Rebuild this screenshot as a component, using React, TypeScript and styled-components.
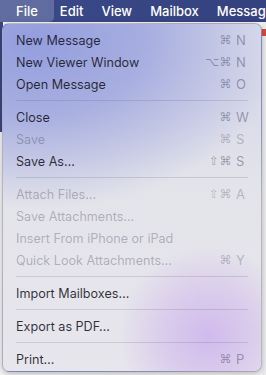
import * as React from 'react'
import styled, { createGlobalStyle } from 'styled-components'

const GlobalStyle = createGlobalStyle`
  html, body {
    margin: 0;
    padding: 0;
    width: 266px;
    height: 375px;
    overflow: hidden;
    background: #f4f4f6;
  }
  body {
    font-family: Inter, "Noto Sans", "DejaVu Sans", sans-serif;
    -webkit-font-smoothing: antialiased;
  }
`

type Entry =
  | { kind: 'item'; label: string; mods?: string; keyChar?: string; disabled?: boolean }
  | { kind: 'sep' }

const entries: Entry[] = [
  { kind: 'item', label: 'New Message', mods: '⌘', keyChar: 'N' },
  { kind: 'item', label: 'New Viewer Window', mods: '⌥⌘', keyChar: 'N' },
  { kind: 'item', label: 'Open Message', mods: '⌘', keyChar: 'O' },
  { kind: 'sep' },
  { kind: 'item', label: 'Close', mods: '⌘', keyChar: 'W' },
  { kind: 'item', label: 'Save', mods: '⌘', keyChar: 'S', disabled: true },
  { kind: 'item', label: 'Save As…', mods: '⇧⌘', keyChar: 'S' },
  { kind: 'sep' },
  { kind: 'item', label: 'Attach Files…', mods: '⇧⌘', keyChar: 'A', disabled: true },
  { kind: 'item', label: 'Save Attachments…', disabled: true },
  { kind: 'item', label: 'Insert From iPhone or iPad', disabled: true },
  { kind: 'item', label: 'Quick Look Attachments…', mods: '⌘', keyChar: 'Y', disabled: true },
  { kind: 'sep' },
  { kind: 'item', label: 'Import Mailboxes…' },
  { kind: 'sep' },
  { kind: 'item', label: 'Export as PDF…' },
  { kind: 'sep' },
  { kind: 'item', label: 'Print…', mods: '⌘', keyChar: 'P' }
]

const menuTitles = ['File', 'Edit', 'View', 'Mailbox', 'Message']

export default function App() {
  return (
    <Screen>
      <GlobalStyle />
      <MenuBar>
        {menuTitles.map((title, i) => (
          <MenuTitle key={title} active={i === 0}>
            {title}
          </MenuTitle>
        ))}
      </MenuBar>
      <Desktop>
        <LeftStrip />
        <WindowEdge>
          <RedMark />
        </WindowEdge>
        <Dropdown>
          {entries.map((entry, i) =>
            entry.kind === 'sep' ? (
              <Separator key={i} />
            ) : (
              <Row key={i} disabled={entry.disabled}>
                <Label>{entry.label}</Label>
                {entry.keyChar && (
                  <Shortcut disabled={entry.disabled}>
                    <Mods>{entry.mods}</Mods>
                    <KeyChar>{entry.keyChar}</KeyChar>
                  </Shortcut>
                )}
              </Row>
            )
          )}
        </Dropdown>
      </Desktop>
    </Screen>
  )
}

const Screen = styled.div`
  width: 266px;
  height: 375px;
  display: flex;
  flex-direction: column;
  overflow: hidden;
`

const MenuBar = styled.div`
  height: 22px;
  flex: none;
  display: flex;
  align-items: stretch;
  background: linear-gradient(90deg, #3a4989 0%, #35427f 100%);
  white-space: nowrap;
  overflow: hidden;
`

const MenuTitle = styled.div<{ active?: boolean }>`
  padding: 0 ${p => (p.active ? '16px' : '9px')} 0 ${p => (p.active ? '16px' : '9px')};
  display: flex;
  align-items: center;
  color: #ffffff;
  font-size: 13px;
  font-weight: 500;
  border-radius: 0 0 5px 0;
  background: ${p => (p.active ? 'rgba(255, 255, 255, 0.2)' : 'transparent')};
  &:nth-child(2) {
    padding-left: 6px;
  }
`

const Desktop = styled.div`
  flex: 1;
  position: relative;
  display: flex;
  justify-content: space-between;
  background: #f6f6f7;
`

const LeftStrip = styled.div`
  width: 3px;
  height: 110px;
  background: #3a4585;
`

const WindowEdge = styled.div`
  width: 4px;
  display: flex;
  flex-direction: column;
  padding-top: 7px;
  background: #eeeef0;
`

const RedMark = styled.div`
  height: 7px;
  background: #e0483c;
`

const Dropdown = styled.div`
  position: absolute;
  left: 2px;
  top: 1px;
  width: 260px;
  height: 349px;
  box-sizing: border-box;
  padding: 5px 0 4px;
  border-radius: 7px;
  border: 1px solid rgba(60, 60, 80, 0.28);
  box-shadow: 0 2px 6px rgba(0, 0, 0, 0.25);
  background:
    radial-gradient(circle at 205px 312px, rgba(208, 184, 236, 0.95) 0, rgba(208, 184, 236, 0.55) 45px, rgba(208, 184, 236, 0) 90px),
    radial-gradient(ellipse 250px 170px at 30px 15px, rgba(148, 158, 222, 1) 0, rgba(156, 164, 222, 0.8) 45%, rgba(170, 176, 224, 0) 100%),
    radial-gradient(ellipse 120px 80px at 245px 10px, rgba(225, 226, 236, 0.8) 0, rgba(225, 226, 236, 0) 100%),
    linear-gradient(180deg, #cfd2e8 0%, #e3e3ea 45%, #e7e6ec 100%);
  display: flex;
  flex-direction: column;
`

const Row = styled.div<{ disabled?: boolean }>`
  height: 22px;
  flex: none;
  display: flex;
  align-items: center;
  padding: 0 12px 0 13px;
  font-size: 12.6px;
  color: ${p => (p.disabled ? 'rgba(40, 40, 60, 0.3)' : 'rgba(20, 20, 30, 0.88)')};
`

const Label = styled.span`
  flex: 1;
  white-space: nowrap;
`

const Shortcut = styled.span<{ disabled?: boolean }>`
  display: flex;
  align-items: center;
  color: ${p => (p.disabled ? 'rgba(60, 60, 80, 0.3)' : 'rgba(60, 62, 90, 0.45)')};
  font-size: 13px;
`

const Mods = styled.span`
  font-family: "DejaVu Sans", sans-serif;
  font-size: 12px;
  text-align: right;
  letter-spacing: 0.5px;
`

const KeyChar = styled.span`
  width: 13px;
  margin-left: 4px;
  font-family: Inter, "Noto Sans", sans-serif;
`

const Separator = styled.div`
  height: 1px;
  flex: none;
  margin: 5px 13px 5px 13px;
  background: rgba(60, 60, 90, 0.16);
`
